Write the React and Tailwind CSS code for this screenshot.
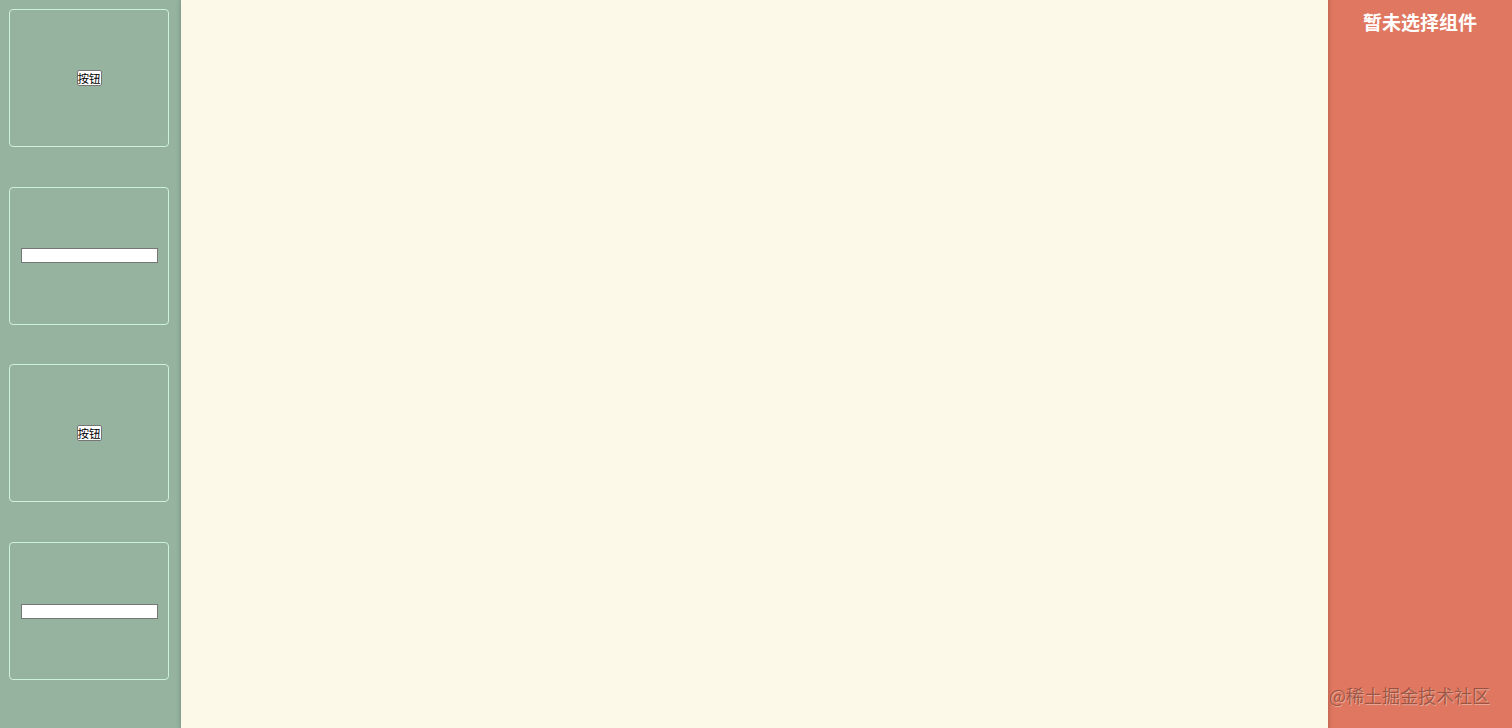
import React from "react";

const materials = ["button", "input", "button", "input"];

const MaterialCard = ({ type }) => {
  return (
    <div className="w-[160px] h-[138px] shrink-0 rounded-[4px] border border-[#cdf2dc] flex items-center justify-center">
      {type === "button" ? (
        <button className="bg-white border border-[#767676] rounded-[2px] px-0 h-[16px] leading-[14px] text-[11.5px] text-black">
          按钮
        </button>
      ) : (
        <input
          type="text"
          className="w-[137px] h-[15px] bg-white border border-[#767676] outline-none"
        />
      )}
    </div>
  );
};

export default function App() {
  return (
    <div
      className="relative flex w-[1512px] h-[728px] overflow-hidden"
      style={{ fontFamily: '"Noto Sans CJK SC", "Liberation Sans", sans-serif' }}
    >
      <aside className="w-[181px] shrink-0 bg-[#96b3a0] pt-[9px] pl-[9px] flex flex-col gap-[39.7px]">
        {materials.map((m, i) => (
          <MaterialCard key={i} type={m} />
        ))}
      </aside>

      <main className="relative z-10 flex-1 bg-[#fdf9e8] shadow-[0_0_4px_1px_rgba(0,0,0,0.18)]" />

      <aside className="w-[184px] shrink-0 bg-[#e07761] flex flex-col items-center">
        <h2 className="mt-[9px] text-[19px] leading-[26px] font-bold text-white">
          暂未选择组件
        </h2>
      </aside>

      <div className="absolute z-20 left-[1329px] top-[682px] text-[18px] leading-[26px] text-[rgba(110,55,35,0.6)] [text-shadow:1px_1px_0_rgba(255,255,255,0.35)] pointer-events-none">
        @稀土掘金技术社区
      </div>
    </div>
  );
}
